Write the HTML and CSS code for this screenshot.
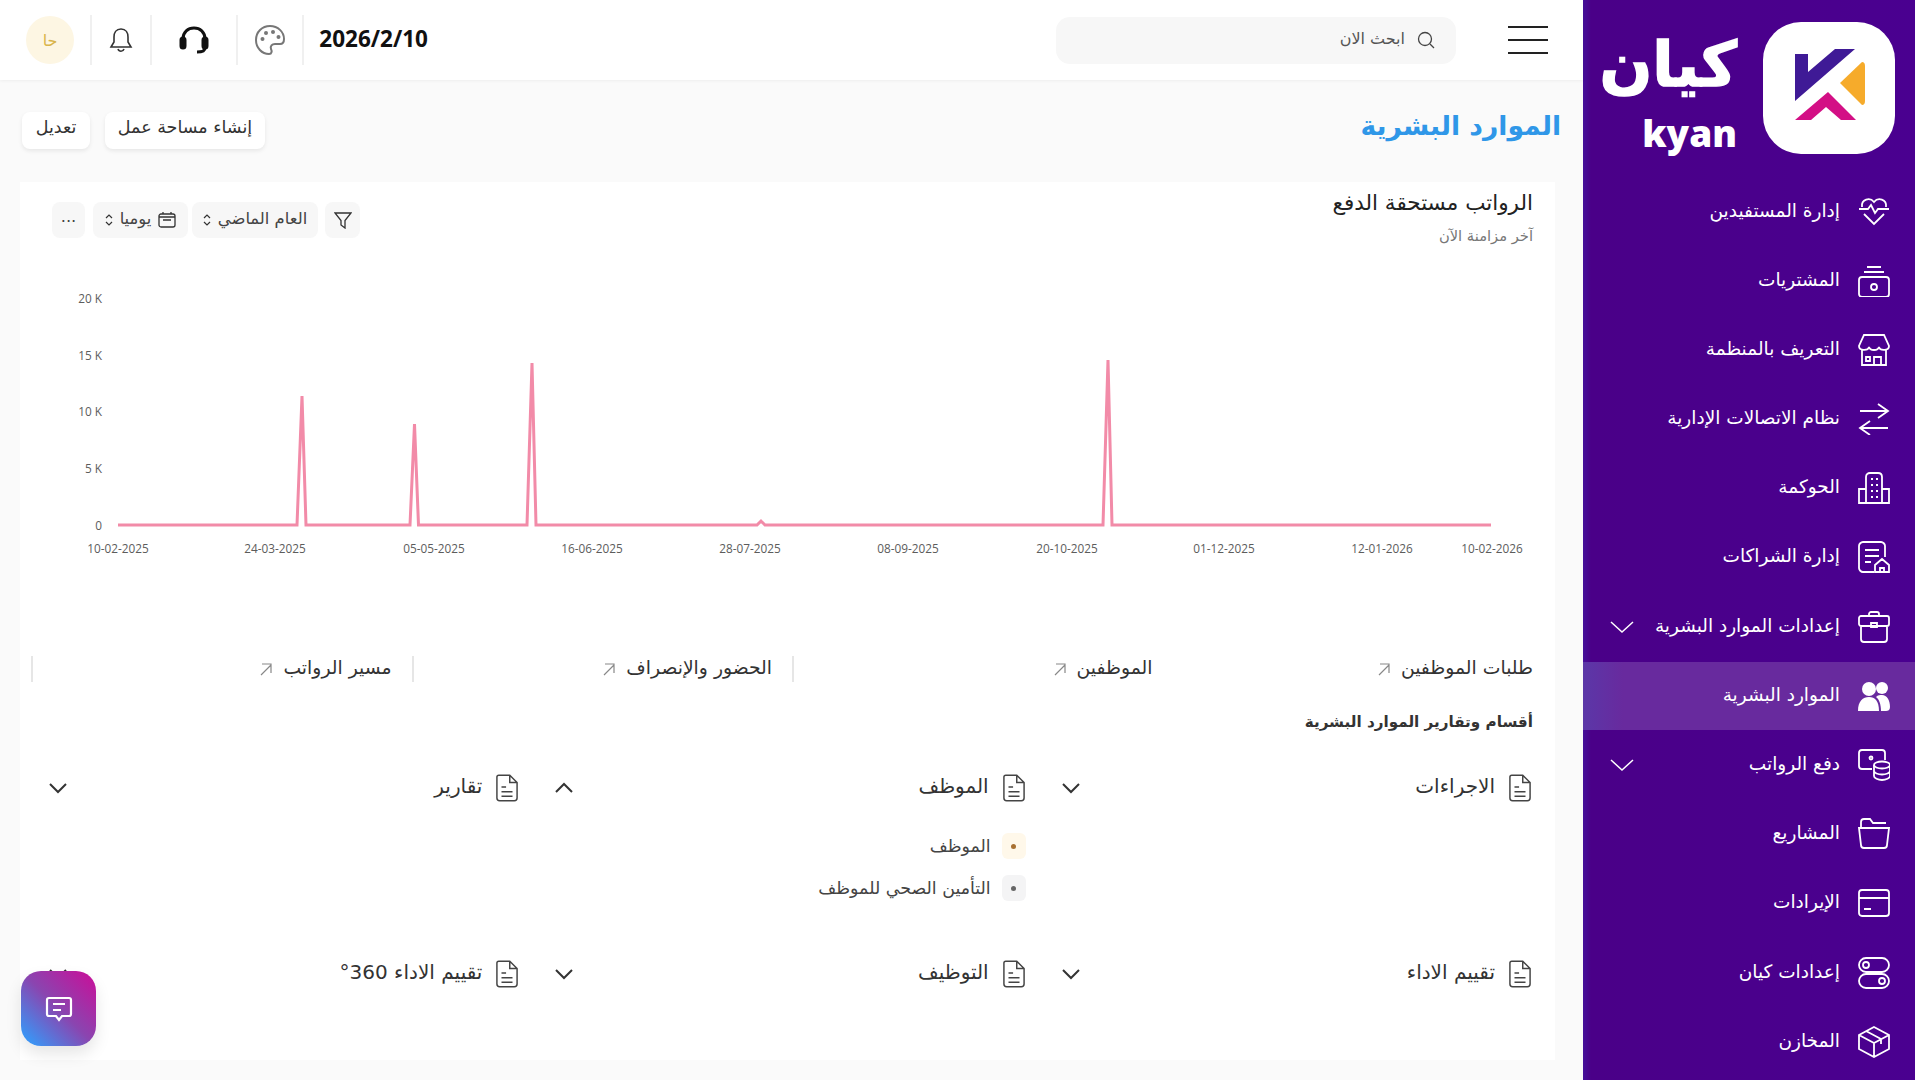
FILE: index.html
```html
<!DOCTYPE html>
<html lang="ar" dir="rtl">
<head>
    <meta charset="UTF-8">
    <title>الموارد البشرية</title>
    <link rel="stylesheet" href="styles.css">
</head>
<body>
<div class="app">
    <aside class="sidebar">
        <div class="brand">
            <div class="brand-mark">
                <svg width="84" height="84" viewBox="-5 -3 84 84">
                    <polygon points="3,5 16,5 16,23 43,0 63,0 3,52" fill="#3f1a96"/>
                    <polygon points="3,71 36,43 64,71 49,71 34,58 19,71" fill="#d30f85"/>
                    <path d="M70 13 L48 34 L70 56 Q73 56 73 52 V17 Q73 13 70 13Z" fill="#f6ab2b"/>
                </svg>
            </div>
            <div class="brand-text">
                <span class="brand-ar">كيان</span>
                <span class="brand-en" dir="ltr">kyan</span>
            </div>
        </div>
        <nav class="nav">
            <a class="nav-item">
                <svg class="nav-icon" viewBox="0 0 32 32"><path d="M4 11C3 3 12 1 16 6 20 1 29 3 28 11M1 13H10L13 9 17 17 20 13H31M6 18L16 28 26 18"/></svg>
                <span>إدارة المستفيدين</span>
            </a>
            <a class="nav-item">
                <svg class="nav-icon" viewBox="0 0 32 32"><path d="M9 2H23M6 7H26"/><rect x="1" y="12" width="30" height="20" rx="3"/><circle cx="16" cy="22" r="3"/></svg>
                <span>المشتريات</span>
            </a>
            <a class="nav-item">
                <svg class="nav-icon" viewBox="0 0 32 32"><path d="M6 1H26L31 12C31 17 22 17 21 13 20 17 12 17 11 13 10 17 1 17 1 12ZM4 16V31H28V16M16 31V23H23V31M8 23H12V27H8Z"/></svg>
                <span>التعريف بالمنظمة</span>
            </a>
            <a class="nav-item">
                <svg class="nav-icon" viewBox="0 0 32 32"><path d="M2 8H30M20 1L30 8 20 15M30 25H2M12 18L2 25 12 32"/></svg>
                <span>نظام الاتصالات الإدارية</span>
            </a>
            <a class="nav-item">
                <svg class="nav-icon" viewBox="0 0 32 32"><path d="M8 31V5C8 2 10 1 12 1H20C22 1 24 2 24 5V31M8 17H1V31H31V17H24M13 7H15M18 7H20M13 13H15M18 13H20M13 19H15M18 19H20M13 25H15M18 25H20"/></svg>
                <span>الحوكمة</span>
            </a>
            <a class="nav-item">
                <svg class="nav-icon" viewBox="0 0 32 32"><path d="M16 31H5C3 31 1 29 1 27V5C1 3 3 1 5 1H23C25 1 27 3 27 5V16M7 9H21M7 15H21M7 21H13M17 31V24L24 18 31 24V31ZM22 31V27H26V31"/></svg>
                <span>إدارة الشراكات</span>
            </a>
            <a class="nav-item">
                <svg class="nav-icon" viewBox="0 0 32 32"><path d="M11 5V3C11 2 12 1 13 1H19C20 1 21 2 21 3V5M3 5H29C30 5 31 6 31 7V13C31 14 30 15 29 15H3C2 15 1 14 1 13V7C1 6 2 5 3 5ZM3 15V28C3 30 4 31 6 31H26C28 31 29 30 29 28V15M13 12H19V16H13Z"/></svg>
                <span>إعدادات الموارد البشرية</span>
                <svg class="nav-chevron" viewBox="0 0 24 14"><path d="M1 2L12 12 23 2"/></svg>
            </a>
            <a class="nav-item active">
                <svg class="nav-icon solid" viewBox="0 0 32 32"><circle cx="11" cy="9" r="7"/><circle cx="24" cy="8" r="6"/><path d="M0 31C0 21 5 17 11 17 17 17 21 21 21 31ZM23 31C23 24 21 19 18 17 20 15 22 15 24 15 29 15 32 20 32 27 32 30 30 31 28 31Z"/></svg>
                <span>الموارد البشرية</span>
            </a>
            <a class="nav-item">
                <svg class="nav-icon" viewBox="0 0 32 32"><path d="M14 20H4C2 20 1 19 1 17V4C1 2 2 1 4 1H24C26 1 27 2 27 4V11"/><circle cx="13" cy="9" r="1.5"/><ellipse cx="24" cy="16" rx="8" ry="3.5"/><path d="M16 16V27C16 29 20 31 24 31 28 31 32 29 32 27V16M16 22C16 24 20 25.500 24 25.500 28 25.500 32 24 32 22"/></svg>
                <span>دفع الرواتب</span>
                <svg class="nav-chevron" viewBox="0 0 24 14"><path d="M1 2L12 12 23 2"/></svg>
            </a>
            <a class="nav-item">
                <svg class="nav-icon" viewBox="0 0 32 32"><path d="M3 9V4C3 2 4 1 6 1H12L15 5H28M1 10H31L29 27C29 29 28 30 26 30H6C4 30 3 29 3 27Z"/></svg>
                <span>المشاريع</span>
            </a>
            <a class="nav-item">
                <svg class="nav-icon" viewBox="0 0 32 32"><rect x="1" y="3" width="30" height="26" rx="3"/><path d="M1 11H31M6 22H13"/></svg>
                <span>الإيرادات</span>
            </a>
            <a class="nav-item">
                <svg class="nav-icon" viewBox="0 0 32 32"><rect x="1" y="1" width="30" height="14" rx="7"/><rect x="1" y="17" width="30" height="14" rx="7"/><circle cx="8" cy="8" r="3"/><circle cx="24" cy="24" r="3"/></svg>
                <span>إعدادات كيان</span>
            </a>
            <a class="nav-item">
                <svg class="nav-icon" viewBox="0 0 32 32"><path d="M16 1L31 9V23L16 31 1 23V9ZM1 9L16 17 31 9M16 17V31M8 5L23 13V18"/></svg>
                <span>المخازن</span>
            </a>
        </nav>
    </aside>

    <main class="main">
        <header class="topbar">
            <div class="burger"><span></span><span></span><span></span></div>
            <div class="search">
                <svg class="search-icon" viewBox="0 0 18 18"><circle cx="8" cy="8" r="6.500"/><path d="M13 13L17 17"/></svg>
                <span>ابحث الان</span>
            </div>
            <div class="top-tools">
                <div class="tool tool-date" dir="ltr">2026/2/10</div>
                <div class="tool tool-palette">
                    <svg width="32" height="32" viewBox="0 0 32 32" fill="none" stroke="#777" stroke-width="2"><path d="M16 2C8 2 2 8 2 16S8 30 15 30C18 30 18 27 17 25 16 22 18 20 21 20H26C29 20 30 18 30 15 30 8 24 2 16 2Z"/><g fill="#777" stroke="none"><circle cx="8.500" cy="15" r="2"/><circle cx="12" cy="9" r="2"/><circle cx="19" cy="8" r="2"/><circle cx="24.500" cy="13" r="2"/></g></svg>
                </div>
                <div class="tool tool-head">
                    <svg width="32" height="32" viewBox="0 0 32 32" fill="none" stroke="#111" stroke-width="3"><path d="M5 20V15C5 8 10 4 16 4S27 8 27 15V20"/><rect x="3" y="14" width="4" height="10" rx="2" fill="#111"/><rect x="25" y="14" width="4" height="10" rx="2" fill="#111"/><path d="M27 24C27 27 24 28 19 28"/></svg>
                </div>
                <div class="tool tool-bell">
                    <svg width="24" height="26" viewBox="0 0 24 26" fill="none" stroke="#333" stroke-width="1.600"><path d="M12 2C7 2 5 6 5 10V15L2 20H22L19 15V10C19 6 17 2 12 2ZM9 22C10 25 14 25 15 22"/></svg>
                </div>
                <div class="tool tool-avatar"><span class="avatar">حا</span></div>
            </div>
        </header>

        <div class="page-head">
            <h1 class="page-title">الموارد البشرية</h1>
            <div class="page-actions">
                <button class="btn btn-wide">إنشاء مساحة عمل</button>
                <button class="btn">تعديل</button>
            </div>
        </div>

        <section class="card">
            <div class="card-head">
                <div>
                    <h2 class="card-title">الرواتب مستحقة الدفع</h2>
                    <p class="card-sub">آخر مزامنة الآن</p>
                </div>
                <div class="filters">
                    <div class="chip chip-icon">
                        <svg width="18" height="18" viewBox="0 0 18 18" fill="none" stroke="#333" stroke-width="1.300"><path d="M1 2H17L11 9.500V17L7 14V9.500Z"/></svg>
                    </div>
                    <div class="chip chip-year">
                        <span>العام الماضي</span>
                        <svg class="updown" viewBox="0 0 8 14"><path d="M1 5L4 2 7 5M1 9L4 12 7 9"/></svg>
                    </div>
                    <div class="chip chip-day">
                        <svg width="18" height="16" viewBox="0 0 18 16" fill="none" stroke="#333" stroke-width="1.300"><rect x="1" y="2" width="16" height="13" rx="2"/><path d="M1 5H17M5 0V2M13 0V2M5 8H13"/></svg>
                        <span>يوميا</span>
                        <svg class="updown" viewBox="0 0 8 14"><path d="M1 5L4 2 7 5M1 9L4 12 7 9"/></svg>
                    </div>
                    <div class="chip chip-more">...</div>
                </div>
            </div>

            <svg class="chart" width="1535" height="300" viewBox="20 270 1535 300">
                <g class="y-labels" text-anchor="end">
                    <text x="102" y="303">20 K</text>
                    <text x="102" y="360">15 K</text>
                    <text x="102" y="416">10 K</text>
                    <text x="102" y="473">5 K</text>
                    <text x="102" y="530">0</text>
                </g>
                <polyline class="line" points="118,525 297,525 302,396 306,525 410,525 414.500,424 418.500,525 527,525 532,363 536,525 757,525 761,521 765,525 1103,525 1108,360 1112,525 1491,525"/>
                <g class="x-labels" text-anchor="middle">
                    <text x="118" y="553">10-02-2025</text>
                    <text x="275" y="553">24-03-2025</text>
                    <text x="434" y="553">05-05-2025</text>
                    <text x="592" y="553">16-06-2025</text>
                    <text x="750" y="553">28-07-2025</text>
                    <text x="908" y="553">08-09-2025</text>
                    <text x="1067" y="553">20-10-2025</text>
                    <text x="1224" y="553">01-12-2025</text>
                    <text x="1382" y="553">12-01-2026</text>
                    <text x="1492" y="553">10-02-2026</text>
                </g>
            </svg>

            <div class="links">
                <a class="link"><span>طلبات الموظفين</span><svg class="link-arrow" viewBox="0 0 14 14"><path d="M2 13L12 3M3 2H12V11"/></svg></a>
                <a class="link"><span>الموظفين</span><svg class="link-arrow" viewBox="0 0 14 14"><path d="M2 13L12 3M3 2H12V11"/></svg></a>
                <a class="link"><span>الحضور والإنصراف</span><svg class="link-arrow" viewBox="0 0 14 14"><path d="M2 13L12 3M3 2H12V11"/></svg></a>
                <a class="link"><span>مسير الرواتب</span><svg class="link-arrow" viewBox="0 0 14 14"><path d="M2 13L12 3M3 2H12V11"/></svg></a>
            </div>

            <h3 class="section-title">أقسام وتقارير الموارد البشرية</h3>

            <div class="sections">
                <div class="acc">
                    <div class="acc-head">
                        <svg class="doc" viewBox="0 0 24 30"><path d="M3 1H15L23 9V26C23 28 22 29 20 29H4C2 29 1 28 1 26V3C1 2 2 1 3 1ZM15 1V9H23M6 14H11M6 19H18M6 24H18"/></svg>
                        <span>الاجراءات</span>
                        <svg class="chev" viewBox="0 0 20 12"><path d="M2 2L10 10 18 2"/></svg>
                    </div>
                </div>
                <div class="acc">
                    <div class="acc-head">
                        <svg class="doc" viewBox="0 0 24 30"><path d="M3 1H15L23 9V26C23 28 22 29 20 29H4C2 29 1 28 1 26V3C1 2 2 1 3 1ZM15 1V9H23M6 14H11M6 19H18M6 24H18"/></svg>
                        <span>الموظف</span>
                        <svg class="chev" viewBox="0 0 20 12"><path d="M2 10L10 2 18 10"/></svg>
                    </div>
                    <ul class="acc-list">
                        <li><i class="bullet bullet-amber"></i>الموظف</li>
                        <li><i class="bullet bullet-grey"></i>التأمين الصحي للموظف</li>
                    </ul>
                </div>
                <div class="acc">
                    <div class="acc-head">
                        <svg class="doc" viewBox="0 0 24 30"><path d="M3 1H15L23 9V26C23 28 22 29 20 29H4C2 29 1 28 1 26V3C1 2 2 1 3 1ZM15 1V9H23M6 14H11M6 19H18M6 24H18"/></svg>
                        <span>تقارير</span>
                        <svg class="chev" viewBox="0 0 20 12"><path d="M2 2L10 10 18 2"/></svg>
                    </div>
                </div>
                <div class="acc">
                    <div class="acc-head">
                        <svg class="doc" viewBox="0 0 24 30"><path d="M3 1H15L23 9V26C23 28 22 29 20 29H4C2 29 1 28 1 26V3C1 2 2 1 3 1ZM15 1V9H23M6 14H11M6 19H18M6 24H18"/></svg>
                        <span>تقييم الاداء</span>
                        <svg class="chev" viewBox="0 0 20 12"><path d="M2 2L10 10 18 2"/></svg>
                    </div>
                </div>
                <div class="acc">
                    <div class="acc-head">
                        <svg class="doc" viewBox="0 0 24 30"><path d="M3 1H15L23 9V26C23 28 22 29 20 29H4C2 29 1 28 1 26V3C1 2 2 1 3 1ZM15 1V9H23M6 14H11M6 19H18M6 24H18"/></svg>
                        <span>التوظيف</span>
                        <svg class="chev" viewBox="0 0 20 12"><path d="M2 2L10 10 18 2"/></svg>
                    </div>
                </div>
                <div class="acc">
                    <div class="acc-head">
                        <svg class="doc" viewBox="0 0 24 30"><path d="M3 1H15L23 9V26C23 28 22 29 20 29H4C2 29 1 28 1 26V3C1 2 2 1 3 1ZM15 1V9H23M6 14H11M6 19H18M6 24H18"/></svg>
                        <span>تقييم الاداء 360°</span>
                        <svg class="chev" viewBox="0 0 20 12"><path d="M2 2L10 10 18 2"/></svg>
                    </div>
                </div>
            </div>
        </section>
    </main>
</div>

<button class="chat-btn">
    <svg width="28" height="26" viewBox="0 0 28 26" fill="none" stroke="#fff" stroke-width="2.200"><path d="M4 2H24C25.500 2 26 3 26 4V18C26 19 25.500 20 24 20H17L14 24 11 20H4C2.500 20 2 19 2 18V4C2 3 2.500 2 4 2ZM8 8H20M8 14H16"/></svg>
</button>
</body>
</html>
```
FILE: styles.css
```css
* {
    box-sizing: border-box;
}
html, body {
    margin: 0;
    height: 100%;
    overflow: hidden;
}
body {
    font-family: "DejaVu Sans", sans-serif;
    background: #fafafa;
    color: #333;
}
.app {
    display: flex;
    height: 1080px;
}

/* sidebar */
.sidebar {
    width: 332px;
    flex: none;
    background: linear-gradient(90deg, #45109a 0, #4a0088 8px, #4a0090 100%);
    color: #fff;
}
.brand {
    height: 177.5px;
    padding: 22px 20px 0 0;
    display: flex;
    gap: 26px;
}
.brand-mark {
    width: 132px;
    height: 132px;
    background: #fff;
    border-radius: 38px;
    display: flex;
    align-items: center;
    justify-content: center;
}
.brand-text {
    display: flex;
    flex-direction: column;
    align-items: flex-start;
    width: 140px;
}
.brand-ar {
    font-size: 62px;
    font-weight: 700;
    line-height: 86px;
    white-space: nowrap;
    -webkit-text-stroke: 1.500px #fff;
}
.brand-en {
    font-family: "Open Sans", sans-serif;
    font-size: 37px;
    font-weight: 800;
    line-height: 36px;
    margin-top: 7px;
}
.nav {
    display: flex;
    flex-direction: column;
    gap: 1.200px;
}
.nav-item {
    height: 68px;
    display: flex;
    align-items: center;
    gap: 18px;
    padding: 0 25px;
    font-size: 18.500px;
}
.nav-item span {
    margin-top: -3px;
}
.nav-item.active {
    background: linear-gradient(90deg, #5b37a8 0, #682a9e 40px, #682a9e 100%);
}
.nav-icon {
    width: 32px;
    height: 32px;
    flex: none;
    fill: none;
    stroke: #fff;
    stroke-width: 1.800;
}
.nav-icon.solid {
    fill: #fff;
    stroke: none;
}
.nav-chevron {
    width: 24px;
    height: 14px;
    margin-right: auto;
    margin-left: 2px;
    fill: none;
    stroke: #fff;
    stroke-width: 1.500;
}

/* top bar */
.main {
    flex: 1;
    min-width: 0;
}
.topbar {
    height: 80px;
    background: #fff;
    box-shadow: 0 1px 3px rgba(0,0,0,0.05);
    display: flex;
    align-items: center;
    padding: 0 35px 0 26px;
}
.burger {
    width: 40px;
    display: flex;
    flex-direction: column;
    gap: 11px;
    margin-left: 52px;
}
.burger span {
    height: 2px;
    background: #222;
}
.search {
    width: 400px;
    height: 47px;
    background: #f7f7f7;
    border-radius: 14px;
    display: flex;
    align-items: center;
    gap: 12px;
    padding: 0 21px;
    font-size: 16px;
    color: #555;
}
.search span {
    margin-bottom: 4px;
}
.search-icon {
    width: 18px;
    height: 18px;
    fill: none;
    stroke: #444;
    stroke-width: 1.300;
}
.top-tools {
    display: flex;
    margin-right: auto;
}
.tool {
    height: 50px;
    display: flex;
    align-items: center;
    justify-content: center;
    border-right: 2px solid #f0f0f0;
}
.tool-date {
    width: 124px;
    border-right: 0;
    justify-content: flex-end;
    padding-bottom: 4px;
    font-family: "Open Sans", sans-serif;
    font-size: 22.500px;
    font-weight: 700;
    color: #111;
}
.tool-palette { width: 66px; }
.tool-head { width: 86px; }
.tool-bell { width: 60px; }
.tool-avatar { width: 66px; justify-content: flex-end; }
.avatar {
    width: 48px;
    height: 48px;
    border-radius: 50%;
    background: #fdf6e3;
    color: #d9b44a;
    font-size: 16px;
    display: flex;
    align-items: center;
    justify-content: center;
}

/* page head */
.page-head {
    height: 102px;
    padding: 32px 22px 0;
    display: flex;
    justify-content: space-between;
    align-items: flex-start;
}
.page-title {
    margin: -5px 0 0;
    font-size: 26.600px;
    font-weight: 700;
    line-height: 38px;
    color: #2f97e8;
}
.page-actions {
    display: flex;
    gap: 15px;
}
.btn {
    height: 37px;
    width: 68px;
    padding: 0 0 7px;
    border: 0;
    border-radius: 8px;
    background: #fff;
    box-shadow: 0 2px 4px rgba(0,0,0,0.08);
    font: inherit;
    font-size: 17.500px;
    color: #333;
}
.btn-wide {
    width: 160px;
}

/* card */
.card {
    margin: 0 28px 0 20px;
    height: 878px;
    background: #fff;
}
.card-head {
    height: 88px;
    padding: 8px 22px 0 32px;
    display: flex;
    justify-content: space-between;
    align-items: flex-start;
}
.card-title {
    margin: 0;
    font-size: 21.500px;
    font-weight: 400;
    line-height: 26px;
    color: #222;
}
.card-sub {
    margin: 11px 0 0;
    font-size: 14.700px;
    color: #777;
}
.filters {
    display: flex;
    margin-top: 12px;
}
.chip {
    height: 36px;
    background: #f7f7f7;
    border-radius: 8px;
    display: flex;
    align-items: center;
    justify-content: center;
    gap: 7px;
    font-size: 16.400px;
    color: #444;
}
.chip-icon { width: 35px; margin-left: 7px; }
.chip-year { width: 126px; margin-left: 4px; }
.chip-day { width: 95px; margin-left: 8px; }
.chip-more { width: 33px; padding-bottom: 8px; }
.chip span {
    margin-top: -3px;
}
.updown {
    width: 8px;
    height: 14px;
    flex: none;
    fill: none;
    stroke: #333;
    stroke-width: 1.200;
}

/* chart */
.chart {
    display: block;
}
.chart text {
    direction: ltr;
    font-family: "Open Sans", sans-serif;
    font-size: 11.800px;
    fill: #5c5c5c;
}
.line {
    fill: none;
    stroke: #f28ba8;
    stroke-width: 3;
}

/* links */
.links {
    display: grid;
    grid-template-columns: repeat(4, 1fr);
    margin: 86px 2px 0 11px;
}
.link {
    height: 26px;
    display: flex;
    align-items: center;
    gap: 10px;
    padding-right: 20px;
    font-size: 18.800px;
    color: #333;
}
.link span {
    margin-top: -4px;
}
.link:nth-child(n+2) {
    border-left: 2px solid #e6e6e6;
}
.link-arrow {
    width: 14px;
    height: 14px;
    fill: none;
    stroke: #888;
    stroke-width: 1.200;
}
.section-title {
    margin: 28px 22px 0 0;
    font-size: 15.200px;
    font-weight: 700;
    line-height: 24px;
    color: #333;
}

/* sections */
.sections {
    display: grid;
    grid-template-columns: repeat(3, 1fr);
    column-gap: 33px;
    row-gap: 45px;
    margin-top: 34px;
    padding: 0 24px 0 25px;
}
.acc-head {
    height: 40px;
    display: flex;
    align-items: center;
    gap: 14px;
    font-size: 20px;
    color: #333;
}
.acc-head span {
    margin-top: -5px;
}
.doc {
    width: 22px;
    height: 28px;
    flex: none;
    fill: none;
    stroke: #444;
    stroke-width: 1.600;
}
.chev {
    width: 20px;
    height: 12px;
    margin-right: auto;
    margin-left: 3px;
    fill: none;
    stroke: #333;
    stroke-width: 2;
}
.acc-list {
    list-style: none;
    margin: 17px 0 0;
    padding: 0;
}
.acc-list li {
    height: 42px;
    display: flex;
    align-items: center;
    gap: 11px;
    font-size: 17.400px;
    color: #444;
}
.bullet {
    width: 24px;
    height: 26px;
    margin-right: -1px;
    border-radius: 6px;
    display: flex;
    align-items: center;
    justify-content: center;
}
.bullet::after {
    content: "";
    width: 5px;
    height: 5px;
    border-radius: 50%;
}
.bullet-amber { background: #fff8ea; }
.bullet-amber::after { background: #a87132; }
.bullet-grey { background: #f4f4f5; }
.bullet-grey::after { background: #666; }

/* floating chat button */
.chat-btn {
    position: absolute;
    left: 21px;
    top: 971px;
    width: 75px;
    height: 75px;
    border: 0;
    border-radius: 20px;
    background: linear-gradient(45deg, #3d92f2 10%, #8a45b0 50%, #c5129a 95%);
    box-shadow: 0 8px 16px rgba(0,0,0,0.1);
    display: flex;
    align-items: center;
    justify-content: center;
}
```
